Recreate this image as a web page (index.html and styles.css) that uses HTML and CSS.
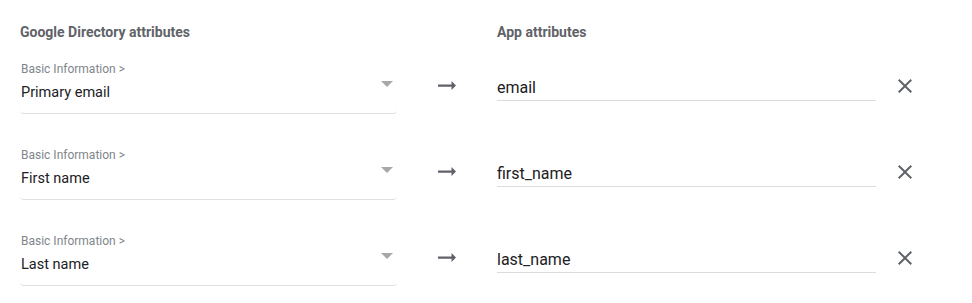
FILE: index.html
```html
<!DOCTYPE html>
<html lang="en">
<head>
    <meta charset="UTF-8" />
    <title>Attribute mapping</title>
    <link rel="stylesheet" href="styles.css">
</head>
<body>

<div class="mapping">
    <div class="heads">
        <div class="head">Google Directory attributes</div>
        <div></div>
        <div class="head">App attributes</div>
        <div></div>
    </div>

    <div class="rows">
        <div class="row">
            <div class="field">
                <div class="field-text">
                    <div class="field-label">Basic Information &gt;</div>
                    <div class="field-value">Primary email</div>
                </div>
                <svg class="caret" width="12" height="6" viewBox="0 0 12 6"><path d="M0 0h12L6 6z" /></svg>
            </div>
            <svg class="arrow" width="18" height="9" viewBox="4 8 16 8"><path d="M16.01 11H4v2h12.01v3L20 12l-3.99-4z" /></svg>
            <input class="app-input" type="text" value="email" />
            <button class="remove" title="Remove">
                <svg width="24" height="24" viewBox="0 0 24 24"><path d="M19 6.41 17.59 5 12 10.59 6.41 5 5 6.41 10.59 12 5 17.59 6.41 19 12 13.41 17.59 19 19 17.59 13.41 12z" /></svg>
            </button>
        </div>

        <div class="row">
            <div class="field">
                <div class="field-text">
                    <div class="field-label">Basic Information &gt;</div>
                    <div class="field-value">First name</div>
                </div>
                <svg class="caret" width="12" height="6" viewBox="0 0 12 6"><path d="M0 0h12L6 6z" /></svg>
            </div>
            <svg class="arrow" width="18" height="9" viewBox="4 8 16 8"><path d="M16.01 11H4v2h12.01v3L20 12l-3.99-4z" /></svg>
            <input class="app-input" type="text" value="first_name" />
            <button class="remove" title="Remove">
                <svg width="24" height="24" viewBox="0 0 24 24"><path d="M19 6.41 17.59 5 12 10.59 6.41 5 5 6.41 10.59 12 5 17.59 6.41 19 12 13.41 17.59 19 19 17.59 13.41 12z" /></svg>
            </button>
        </div>

        <div class="row">
            <div class="field">
                <div class="field-text">
                    <div class="field-label">Basic Information &gt;</div>
                    <div class="field-value">Last name</div>
                </div>
                <svg class="caret" width="12" height="6" viewBox="0 0 12 6"><path d="M0 0h12L6 6z" /></svg>
            </div>
            <svg class="arrow" width="18" height="9" viewBox="4 8 16 8"><path d="M16.01 11H4v2h12.01v3L20 12l-3.99-4z" /></svg>
            <input class="app-input" type="text" value="last_name" />
            <button class="remove" title="Remove">
                <svg width="24" height="24" viewBox="0 0 24 24"><path d="M19 6.41 17.59 5 12 10.59 6.41 5 5 6.41 10.59 12 5 17.59 6.41 19 12 13.41 17.59 19 19 17.59 13.41 12z" /></svg>
            </button>
        </div>
    </div>
</div>

</body>
</html>
```

FILE: styles.css
```css
body {
    margin: 0;
    font-family: Roboto, "Liberation Sans", Arial, sans-serif;
    background: #fff;
    color: #202124;
}
.mapping {
    padding: 22px 20px 0;
}
.heads, .row {
    display: grid;
    grid-template-columns: 377px 100px 379px 57px;
}
.head {
    font-size: 14px;
    font-weight: 700;
    line-height: 20px;
    color: #5f6368;
}
.rows {
    display: flex;
    flex-direction: column;
    gap: 33px;
    margin-top: 19px;
}
.row {
    align-items: start;
}
.field {
    display: flex;
    padding-bottom: 10px;
    border-bottom: 1px solid #e0e0e0;
    border-radius: 0 0 4px 4px;
}
.field-text {
    flex: 1;
    padding-left: 1px;
}
.field-label {
    font-size: 12px;
    line-height: 16px;
    color: #80868b;
}
.field-value {
    margin-top: 6px;
    font-size: 14.5px;
    line-height: 20px;
    color: #202124;
}
.caret {
    margin: 20px 4px 0 0;
    fill: #a8a8a8;
}
.arrow {
    justify-self: center;
    margin-top: 20px;
    fill: #5f6368;
}
.app-input {
    margin-top: 17px;
    padding: 0 0 2px;
    width: 100%;
    box-sizing: border-box;
    border: none;
    border-bottom: 1px solid #dadce0;
    font-family: inherit;
    font-size: 16px;
    line-height: 20px;
    color: #202124;
    outline: none;
    background: transparent;
}
.remove {
    justify-self: center;
    margin-top: 13px;
    padding: 0;
    width: 24px;
    height: 24px;
    border: none;
    background: none;
    cursor: pointer;
    fill: #5f6368;
}
.remove svg {
    display: block;
}
```
